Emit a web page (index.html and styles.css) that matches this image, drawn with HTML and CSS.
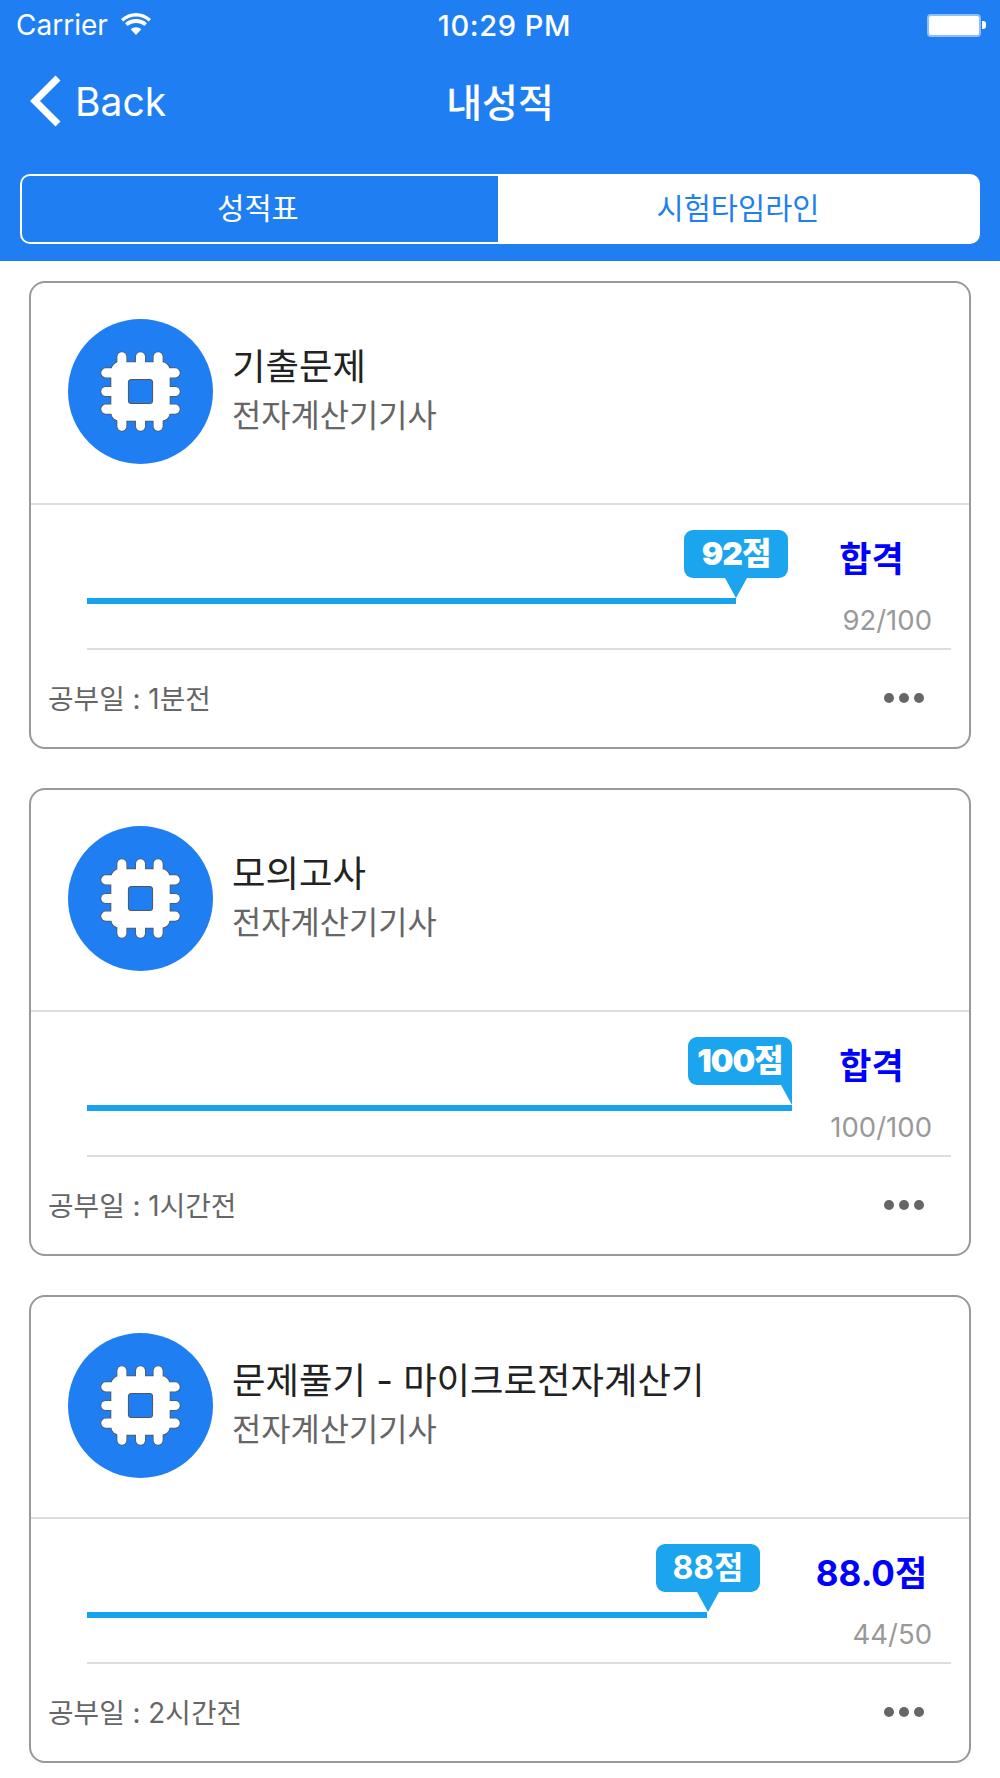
FILE: index.html
```html
<!DOCTYPE html>
<html lang="ko">
<head>
  <meta charset="UTF-8">
  <title>내성적</title>
  <link rel="stylesheet" href="styles.css">
</head>
<body>
  <svg class="icon_defs" aria-hidden="true">
    <symbol id="chip" viewBox="0 0 144 144">
      <g class="chip_edge">
        <rect x="43" y="43" width="58" height="58" rx="8"/>
        <rect x="49" y="33" width="9" height="78" rx="4.5"/>
        <rect x="67.5" y="33" width="9" height="78" rx="4.5"/>
        <rect x="85" y="33" width="9" height="78" rx="4.5"/>
        <rect x="33" y="49" width="78" height="9" rx="4.5"/>
        <rect x="33" y="67.5" width="78" height="9" rx="4.5"/>
        <rect x="33" y="85" width="78" height="9" rx="4.5"/>
      </g>
      <g class="chip_fill">
        <rect x="43" y="43" width="58" height="58" rx="8"/>
        <rect x="49" y="33" width="9" height="78" rx="4.5"/>
        <rect x="67.5" y="33" width="9" height="78" rx="4.5"/>
        <rect x="85" y="33" width="9" height="78" rx="4.5"/>
        <rect x="33" y="49" width="78" height="9" rx="4.5"/>
        <rect x="33" y="67.5" width="78" height="9" rx="4.5"/>
        <rect x="33" y="85" width="78" height="9" rx="4.5"/>
      </g>
      <rect class="chip_core" x="60" y="60" width="24" height="24" rx="3"/>
    </symbol>
  </svg>

  <header class="top">
    <div class="status">
      <div class="status_left">
        <span>Carrier</span>
        <svg class="wifi" viewBox="0 0 30 22">
          <path d="M15 22L9.700 16.300C12.700 13.500 17.300 13.500 20.300 16.300Z"/>
          <path d="M6.600 13.100L4 10.300C10.200 4.700 19.800 4.700 26 10.300L23.400 13.100C18.700 8.800 11.300 8.800 6.600 13.100Z"/>
          <path d="M2.300 8.500L0 6C8.500 -2 21.500 -2 30 6L27.700 8.500C20.500 1.800 9.500 1.800 2.300 8.500Z"/>
        </svg>
      </div>
      <span class="clock">10:29 PM</span>
      <div class="battery"><span class="battery_level"></span><span class="battery_cap"></span></div>
    </div>
    <nav class="nav">
      <div class="back">
        <svg class="chevron" viewBox="0 0 34 52"><path d="M29 3L6 26L29 49"/></svg>
        <span>Back</span>
      </div>
      <h1 class="title">내성적</h1>
    </nav>
    <div class="tabs">
      <div class="tab tab_on">성적표</div>
      <div class="tab">시험타임라인</div>
    </div>
  </header>

  <main class="list">
    <section class="card">
      <div class="card_head">
        <div class="avatar"><svg class="chip"><use href="#chip"/></svg></div>
        <div>
          <h2 class="card_title">기출문제</h2>
          <p class="card_sub">전자계산기기사</p>
        </div>
      </div>
      <div class="score">
        <div class="meter">
          <div class="bar" style="width: 92%"></div>
          <div class="bubble bubble_fat" style="left: 597px">92점<i class="tip"></i></div>
        </div>
        <div class="result">
          <p class="verdict">합격</p>
          <p class="count">92/100</p>
        </div>
      </div>
      <div class="card_foot">
        <span class="studied">공부일 : 1분전</span>
        <div class="dots"><i></i><i></i><i></i></div>
      </div>
    </section>

    <section class="card">
      <div class="card_head">
        <div class="avatar"><svg class="chip"><use href="#chip"/></svg></div>
        <div>
          <h2 class="card_title">모의고사</h2>
          <p class="card_sub">전자계산기기사</p>
        </div>
      </div>
      <div class="score">
        <div class="meter">
          <div class="bar" style="width: 100%"></div>
          <div class="bubble bubble_fat bubble_full" style="left: 601px">100점<i class="tip"></i></div>
        </div>
        <div class="result">
          <p class="verdict">합격</p>
          <p class="count">100/100</p>
        </div>
      </div>
      <div class="card_foot">
        <span class="studied">공부일 : 1시간전</span>
        <div class="dots"><i></i><i></i><i></i></div>
      </div>
    </section>

    <section class="card">
      <div class="card_head">
        <div class="avatar"><svg class="chip"><use href="#chip"/></svg></div>
        <div>
          <h2 class="card_title">문제풀기 - 마이크로전자계산기</h2>
          <p class="card_sub">전자계산기기사</p>
        </div>
      </div>
      <div class="score">
        <div class="meter">
          <div class="bar" style="width: 88%"></div>
          <div class="bubble" style="left: 569px">88점<i class="tip"></i></div>
        </div>
        <div class="result">
          <p class="verdict">88.0점</p>
          <p class="count">44/50</p>
        </div>
      </div>
      <div class="card_foot">
        <span class="studied">공부일 : 2시간전</span>
        <div class="dots"><i></i><i></i><i></i></div>
      </div>
    </section>
  </main>
</body>
</html>
```

FILE: styles.css
```css
*{
  box-sizing: border-box;
}
body{
  margin: 0;
  padding: 0;
  background: #fff;
  font-family: Inter, "Noto Sans CJK KR", sans-serif;
}
h1, h2, p{
  margin: 0;
  font-weight: normal;
}
.icon_defs{
  display: none;
}

/* header */
.top{
  height: 261px;
  background: #1f7ff2;
  color: #fff;
}
.status{
  display: grid;
  grid-template-columns: 1fr auto 1fr;
  align-items: center;
  height: 50px;
  padding: 0 14px 0 16px;
  font-size: 28px;
}
.status_left{
  display: flex;
  align-items: center;
  gap: 13px;
}
.wifi{
  width: 30px;
  height: 22px;
  fill: #fff;
  margin-bottom: 3px;
}
.clock{
  margin-left: 7px;
  font-size: 29px;
  font-weight: 500;
  letter-spacing: 0.6px;
}
.battery{
  justify-self: end;
  display: flex;
  align-items: center;
}
.battery_level{
  width: 54px;
  height: 23px;
  background: #fff;
  border: 2px solid #8fbef8;
  border-radius: 4px;
}
.battery_cap{
  width: 4px;
  height: 8px;
  margin-left: 1px;
  background: #fff;
  border-radius: 0 3px 3px 0;
}
.nav{
  position: relative;
  display: flex;
  align-items: center;
  justify-content: center;
  height: 102px;
  padding-bottom: 3px;
}
.back{
  position: absolute;
  left: 29px;
  top: 25px;
  display: flex;
  align-items: center;
  gap: 12px;
  font-size: 39px;
}
.chevron{
  width: 34px;
  height: 52px;
  fill: none;
  stroke: #fff;
  stroke-width: 7;
}
.title{
  font-size: 39px;
  font-weight: 500;
}
.tabs{
  display: flex;
  height: 70px;
  margin: 22px 20px 0;
  border: 2px solid #fff;
  border-radius: 10px;
  background: #fff;
  overflow: hidden;
  font-size: 29.5px;
  color: #1f7ff2;
}
.tab{
  display: flex;
  align-items: center;
  justify-content: center;
  flex: 0 0 480px;
  padding-bottom: 6px;
}
.tab_on{
  flex: 0 0 476px;
  padding-right: 4px;
  background: #1f7ff2;
  color: #fff;
}

/* cards */
.list{
  display: flex;
  flex-direction: column;
  gap: 39px;
  padding: 20px 29px 0;
}
.card{
  height: 468px;
  border: 2px solid #999;
  border-radius: 16px;
  display: flex;
  flex-direction: column;
}
.card_head{
  display: flex;
  align-items: center;
  gap: 19px;
  height: 222px;
  padding: 0 37px;
  border-bottom: 2px solid #ddd;
}
.avatar{
  flex: none;
  width: 145px;
  height: 145px;
  margin-top: -3px;
  border-radius: 50%;
  background: #1f7ff2;
}
.chip{
  display: block;
  width: 145px;
  height: 145px;
}
.chip_edge{
  fill: none;
  stroke: #555;
  stroke-width: 1.6;
}
.chip_fill{
  fill: #fff;
}
.chip_core{
  fill: #1f7ff2;
  stroke: #555;
  stroke-width: 1;
}
.card_title{
  font-size: 36.4px;
  line-height: 50px;
  margin-top: -5px;
  color: #222;
}
.card_sub{
  margin-top: 1px;
  font-size: 31.8px;
  line-height: 46px;
  color: #666;
}
.score{
  display: flex;
  gap: 19px;
  height: 145px;
  margin: 0 18px 0 56px;
  border-bottom: 2px solid #ddd;
}
.meter{
  position: relative;
  flex: 0 0 705px;
  padding-top: 93px;
}
.bar{
  height: 6px;
  background: #17a2ee;
}
.bubble{
  position: absolute;
  top: 25px;
  width: 104px;
  height: 48px;
  border-radius: 9px;
  background: #1aa5ee;
  color: #fff;
  font-size: 32px;
  font-weight: 700;
  line-height: 48px;
  text-align: center;
}
.bubble_fat{
  font-weight: 900;
  letter-spacing: -1px;
}
.tip{
  position: absolute;
  top: 48px;
  left: 41px;
  width: 22px;
  height: 20px;
  background: #1aa5ee;
  clip-path: polygon(0 0, 100% 0, 50% 100%);
}
.bubble_full{
  border-bottom-right-radius: 0;
}
.bubble_full .tip{
  left: 93px;
  width: 11px;
  clip-path: polygon(0 0, 100% 0, 100% 100%);
}
.result{
  flex: 0 0 121px;
  text-align: center;
}
.verdict{
  margin-top: 32px;
  font-size: 35px;
  font-weight: 700;
  line-height: 44px;
  color: #00f;
}
.count{
  margin-top: 22px;
  font-size: 27.5px;
  line-height: 34px;
  color: #999;
  text-align: right;
}
.card_foot{
  flex: 1;
  display: flex;
  align-items: center;
  justify-content: space-between;
  padding: 0 45px 0 17px;
}
.studied{
  margin-top: -3px;
  font-size: 27.8px;
  color: #666;
}
.dots{
  display: flex;
  gap: 5px;
  margin-top: -1px;
}
.dots i{
  width: 10px;
  height: 10px;
  border-radius: 50%;
  background: #666;
}
```
